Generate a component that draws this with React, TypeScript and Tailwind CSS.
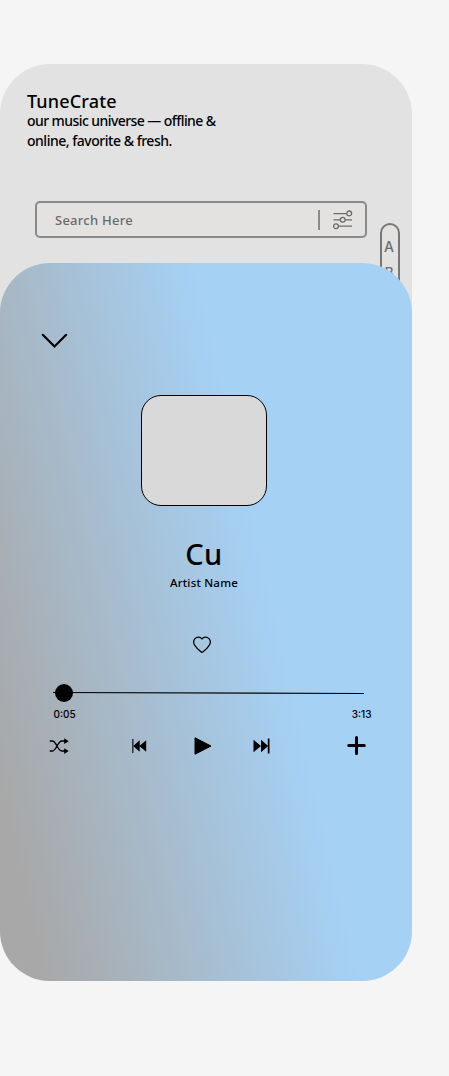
function FilterIcon() {
  return (
    <svg width="20" height="20" viewBox="0 0 20 20" fill="none" stroke="#6c6c6c" strokeWidth="1.3">
      <path d="M.5 3.6H13.5M.5 9.8H7.2M12.2 9.8H19M5.5 16.2H19" />
      <circle cx="16.2" cy="3.4" r="2.4" />
      <circle cx="9.7" cy="9.7" r="2.4" />
      <circle cx="3" cy="16.2" r="2.4" />
    </svg>
  );
}

function ShuffleIcon() {
  return (
    <svg width="20" height="16" viewBox="0 0 20 16" fill="none" stroke="black" strokeWidth="1.4">
      <path d="M.7 3H3.4C7.4 3 8.4 13 12.9 13H16M.7 13H3.4C7.4 13 8.4 3 12.9 3H16" />
      <path d="M15.2.2 19.7 3.2 15.2 5.9ZM15.2 10.3 19.7 13 15.2 15.9Z" fill="black" stroke="none" />
    </svg>
  );
}

function SkipIcon({ next = false }: { next?: boolean }) {
  return next ? (
    <svg width="17" height="16" viewBox="0 0 17 16">
      <path d="M.5 1.8 8 8 .5 14.2ZM8 1.8 15.2 8 8 14.2Z" />
      <path d="M14.8.5H16.5V15.5H14.8Z" />
    </svg>
  ) : (
    <svg width="15" height="16" viewBox="0 0 15 16">
      <path d="M7.7 2.2V13.8L1.2 8ZM14.2 2.2V13.8L7.3 8Z" />
      <path d="M.3 1H1.4V15H.3Z" />
    </svg>
  );
}

function Player() {
  return (
    <section className="absolute left-0 top-[199px] flex h-[718px] w-[412px] flex-col rounded-[50px] bg-[linear-gradient(77deg,#a8a8a8_8%,#a5d1f5_62.5%)]">
      <button className="ml-[41px] mt-[70px] h-4 w-[27px]" aria-label="Close">
        <svg width="27" height="16" viewBox="0 0 27 16" fill="none" stroke="black" strokeWidth="2.2" strokeLinecap="round">
          <path d="M1.8 1.8 13.5 13.5 25.2 1.8" />
        </svg>
      </button>
      <div className="ml-[141px] mt-[46px] h-[111px] w-[126px] rounded-[20px] border border-black bg-[#d9d9d9]" />
      <div className="mt-[30px] flex w-[408px] flex-col items-center">
        <h2 className="text-[29px] font-medium leading-[36px] tracking-[.5px]">Cu</h2>
        <p className="mt-[3px] text-[11.5px] font-medium leading-[16px] tracking-[.2px]">Artist Name</p>
      </div>
      <button className="ml-[193px] mt-[45px] h-[18px] w-[18px]" aria-label="Favorite">
        <svg width="18" height="18" viewBox="0 0 18 18" fill="none" stroke="black" strokeWidth="1.25" strokeLinejoin="round">
          <path d="M9 3C7.4.6 3.8.7 2 2.7C.2 4.7.5 7.4 1.8 9.3C3.2 11.5 6 14.2 7.9 15.8Q9 16.7 10.1 15.8C12 14.2 14.8 11.5 16.2 9.3C17.5 7.4 17.8 4.7 16 2.7C14.2.7 10.6.6 9 3Z" />
        </svg>
      </button>
      <svg className="ml-[53px] mt-[29px]" width="312" height="20" viewBox="0 0 312 20">
        <path d="M0 9.5 311 10.5" stroke="black" strokeWidth="1.1" />
        <circle cx="11" cy="10" r="9" />
      </svg>
      <div className="ml-[53.5px] mt-[5px] flex w-[318px] justify-between font-[Inter,sans-serif] text-[10px] font-medium leading-[12px]">
        <span>0:05</span>
        <span>3:13</span>
      </div>
      <div className="ml-[49px] mt-4 flex h-5 w-[318px] items-center">
        <ShuffleIcon />
        <span className="ml-[63px]"><SkipIcon /></span>
        <svg className="ml-[47px]" width="18" height="18" viewBox="0 0 18 18">
          <path d="M1 .8 17 9 1 17.2Z" stroke="black" strokeWidth="1" strokeLinejoin="round" />
        </svg>
        <span className="ml-[41px]"><SkipIcon next /></span>
        <svg className="ml-[77px]" width="20" height="20" viewBox="0 0 20 20" stroke="black" strokeWidth="3" strokeLinecap="round">
          <path d="M9.5 1.5V17.5M1.7 9.5H17.3" />
        </svg>
      </div>
    </section>
  );
}

export default function App() {
  return (
    <div className="h-[1076px] w-[449px] bg-[#f5f5f5] pt-16 font-['Noto_Sans',sans-serif] text-black">
      <main className="relative flex h-[917px] w-[412px] flex-col rounded-[50px] bg-[#e2e2e2]">
        <header className="ml-[27px] pt-[27px]">
          <h1 className="text-[18px] font-medium leading-[20px] tracking-[.15px]">TuneCrate</h1>
          <p className="w-[210px] whitespace-nowrap text-[14px] font-medium leading-[20px] tracking-[-.57px]">
            our music universe — offline &amp;<br />
            <span className="tracking-[-.48px]">online, favorite &amp; fresh.</span>
          </p>
        </header>
        <div className="ml-[35px] mt-[50px] flex h-[37px] w-[332px] items-center rounded-[5px] border-2 border-[#8a8a8a] bg-[#e3e2e0] pl-[18px]">
          <span className="text-[13px] font-medium leading-5 tracking-[.25px] text-[#6b6b6b]">Search Here</span>
          <span className="ml-auto h-5 w-0.5 bg-[#8a8a8a]" />
          <span className="ml-[13px] mr-[12px]"><FilterIcon /></span>
        </div>
        <nav className="absolute left-[380px] top-[159px] flex h-[300px] w-5 flex-col items-center rounded-full border-2 border-[#777] bg-[#e3e2e0] pr-[2px] pt-[14px] font-[Inter,sans-serif] text-[14px] font-medium leading-4 text-[#6b6b6b]">
          <span>A</span>
          <span className="mt-[10px]">B</span>
        </nav>
        <Player />
      </main>
    </div>
  );
}
